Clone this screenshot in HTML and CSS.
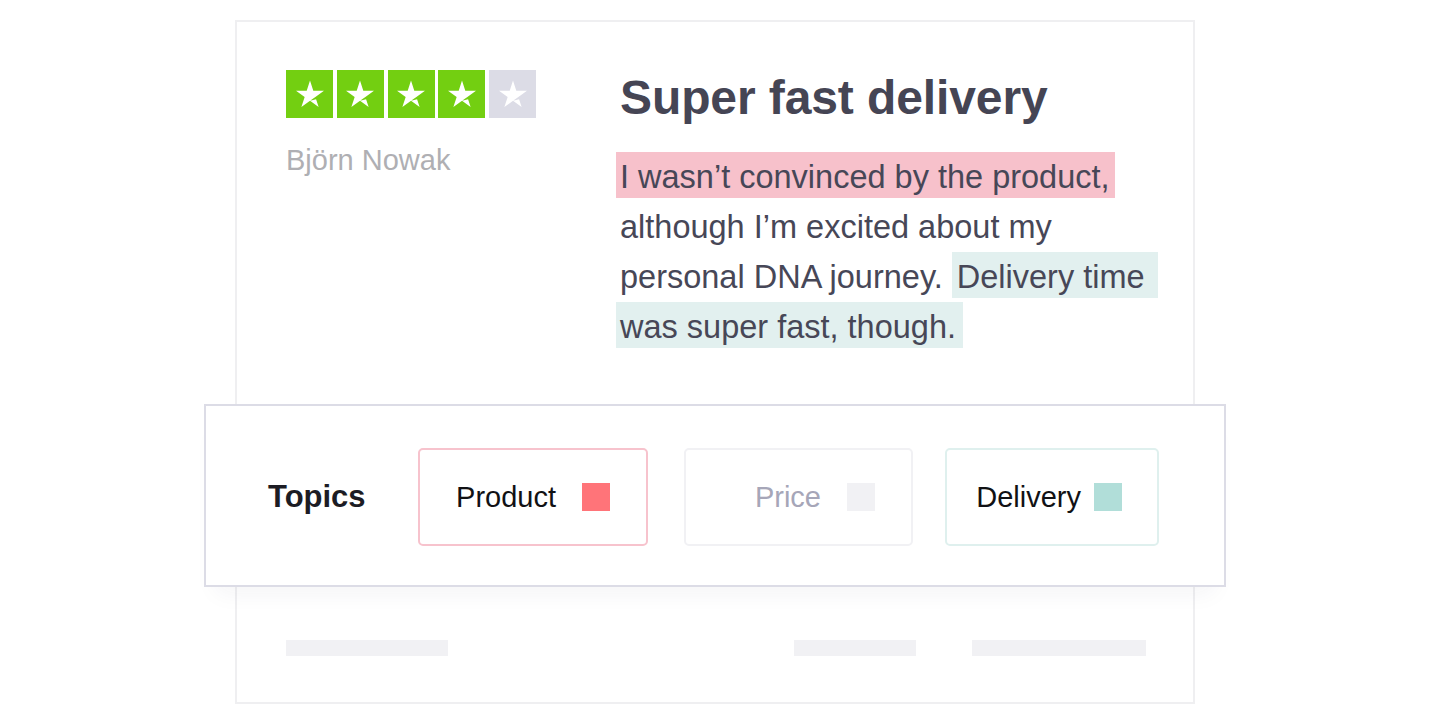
FILE: index.html
```html
<!DOCTYPE html>
<html lang="en">
<head>
<meta charset="utf-8">
<title>Review topics</title>
<link rel="stylesheet" href="styles.css">
</head>
<body>
<div class="card">
  <section class="review">
    <div class="review-meta">
      <div class="stars">
        <span class="star star-on"><svg viewBox="3 3 18 18" width="30" height="30"><path fill="#fff" d="M12 16.094l3.65-.925 1.525 4.7L12 16.094zm8.4-6.075h-6.425L12 3.969l-1.975 6.05H3.6l5.2 3.75-1.975 6.05 5.2-3.75 3.2-2.3 5.175-3.75z"/></svg></span>
        <span class="star star-on"><svg viewBox="3 3 18 18" width="30" height="30"><path fill="#fff" d="M12 16.094l3.65-.925 1.525 4.7L12 16.094zm8.4-6.075h-6.425L12 3.969l-1.975 6.05H3.6l5.2 3.75-1.975 6.05 5.2-3.75 3.2-2.3 5.175-3.75z"/></svg></span>
        <span class="star star-on"><svg viewBox="3 3 18 18" width="30" height="30"><path fill="#fff" d="M12 16.094l3.65-.925 1.525 4.7L12 16.094zm8.4-6.075h-6.425L12 3.969l-1.975 6.05H3.6l5.2 3.75-1.975 6.05 5.2-3.75 3.2-2.3 5.175-3.75z"/></svg></span>
        <span class="star star-on"><svg viewBox="3 3 18 18" width="30" height="30"><path fill="#fff" d="M12 16.094l3.65-.925 1.525 4.7L12 16.094zm8.4-6.075h-6.425L12 3.969l-1.975 6.05H3.6l5.2 3.75-1.975 6.05 5.2-3.75 3.2-2.3 5.175-3.75z"/></svg></span>
        <span class="star star-off"><svg viewBox="3 3 18 18" width="30" height="30"><path fill="#fff" d="M12 16.094l3.65-.925 1.525 4.7L12 16.094zm8.4-6.075h-6.425L12 3.969l-1.975 6.05H3.6l5.2 3.75-1.975 6.05 5.2-3.75 3.2-2.3 5.175-3.75z"/></svg></span>
      </div>
      <div class="author">Björn Nowak</div>
    </div>
    <div class="review-body">
      <h1 class="review-title">Super fast delivery</h1>
      <p class="review-text"><span class="hl hl-product">I wasn’t convinced by the product,</span> although I’m excited about my personal DNA journey. <span class="hl hl-delivery hl-lead">Delivery time</span> <span class="hl hl-delivery hl-tail">was super fast, though.</span></p>
    </div>
  </section>

  <div class="topics">
    <div class="topics-label">Topics</div>
    <div class="chip chip-product"><span class="chip-name">Product</span><span class="chip-swatch"></span></div>
    <div class="chip chip-price"><span class="chip-name">Price</span><span class="chip-swatch"></span></div>
    <div class="chip chip-delivery"><span class="chip-name">Delivery</span><span class="chip-swatch"></span></div>
  </div>

  <div class="footer-bars">
    <span class="bar bar-a"></span>
    <span class="bar bar-b"></span>
    <span class="bar bar-c"></span>
  </div>
</div>
</body>
</html>
```

FILE: styles.css
```css
* { box-sizing: border-box; }

html, body {
  margin: 0;
  padding: 0;
  background: #ffffff;
}

body {
  font-family: "Liberation Sans", Arial, sans-serif;
  color: #474757;
}

.card {
  width: 960px;
  margin: 20px auto 0;
  border: 2px solid #efeff1;
  background: #fff;
}

/* review section */
.review {
  display: grid;
  grid-template-columns: 334px 1fr;
  padding: 48px 47px 52px 49px;
}

.stars {
  display: flex;
  gap: 3.75px;
}

.star {
  width: 47px;
  height: 48px;
  display: flex;
  align-items: center;
  justify-content: center;
}

.star svg { display: block; }

.star-on { background: #73cf11; }
.star-off { background: #dcdce6; }

.author {
  margin-top: 24px;
  font-size: 29px;
  line-height: 36px;
  color: #afafb3;
}

.review-title {
  margin: 0 0 26px;
  font-size: 48px;
  line-height: 56px;
  font-weight: 700;
  color: #454554;
  letter-spacing: -0.1px;
}

.review-text {
  margin: 0;
  width: 545px;
  font-size: 32.5px;
  line-height: 50px;
  color: #474757;
}

.hl {
  padding: 7px 5px 3px 4px;
  margin-left: -4px;
  -webkit-box-decoration-break: clone;
  box-decoration-break: clone;
}

.hl-product { background: #f7c1cb; }
.hl-delivery { background: #e2f0ef; }
.hl-lead { margin-left: 0; padding-left: 5px; padding-right: 13px; }
.hl-tail { padding-right: 7px; }

/* topics bar */
.topics {
  margin: 0 -33px;
  display: flex;
  align-items: center;
  padding: 42px 0 39px 62px;
  border: 2px solid #dcdce6;
  background: #fff;
  box-shadow: 0 18px 22px -12px rgba(40, 40, 70, 0.05);
}

.topics-label {
  flex: 0 0 150px;
  font-size: 31px;
  font-weight: 700;
  color: #1c1c24;
}

.chip {
  height: 98px;
  display: flex;
  align-items: center;
  justify-content: flex-end;
  gap: 26px;
  padding-right: 36px;
  border: 2px solid;
  border-radius: 5px;
  background: #fff;
}

.chip-name {
  font-size: 29px;
  color: #111114;
}

.chip-swatch {
  width: 28px;
  height: 28px;
  flex: 0 0 28px;
}

.chip-product { width: 230px; border-color: #f7c3cd; }
.chip-product .chip-swatch { background: #ff7479; }

.chip-price { width: 229px; margin-left: 36px; border-color: #f1f1f4; }
.chip-price .chip-name { color: #a6a6b8; }
.chip-price .chip-swatch { background: #f1f1f4; }

.chip-delivery { width: 214px; margin-left: 32px; gap: 13px; padding-right: 35px; border-color: #dff0ee; }
.chip-delivery .chip-swatch { background: #b1ded9; }

/* footer placeholder bars */
.footer-bars {
  display: flex;
  margin-top: 53px;
  padding: 0 47px 46px 49px;
}

.bar {
  height: 16px;
  background: #f1f1f4;
}

.bar-a { width: 162px; }
.bar-b { width: 122px; margin-left: auto; }
.bar-c { width: 174px; margin-left: 56px; }
```
